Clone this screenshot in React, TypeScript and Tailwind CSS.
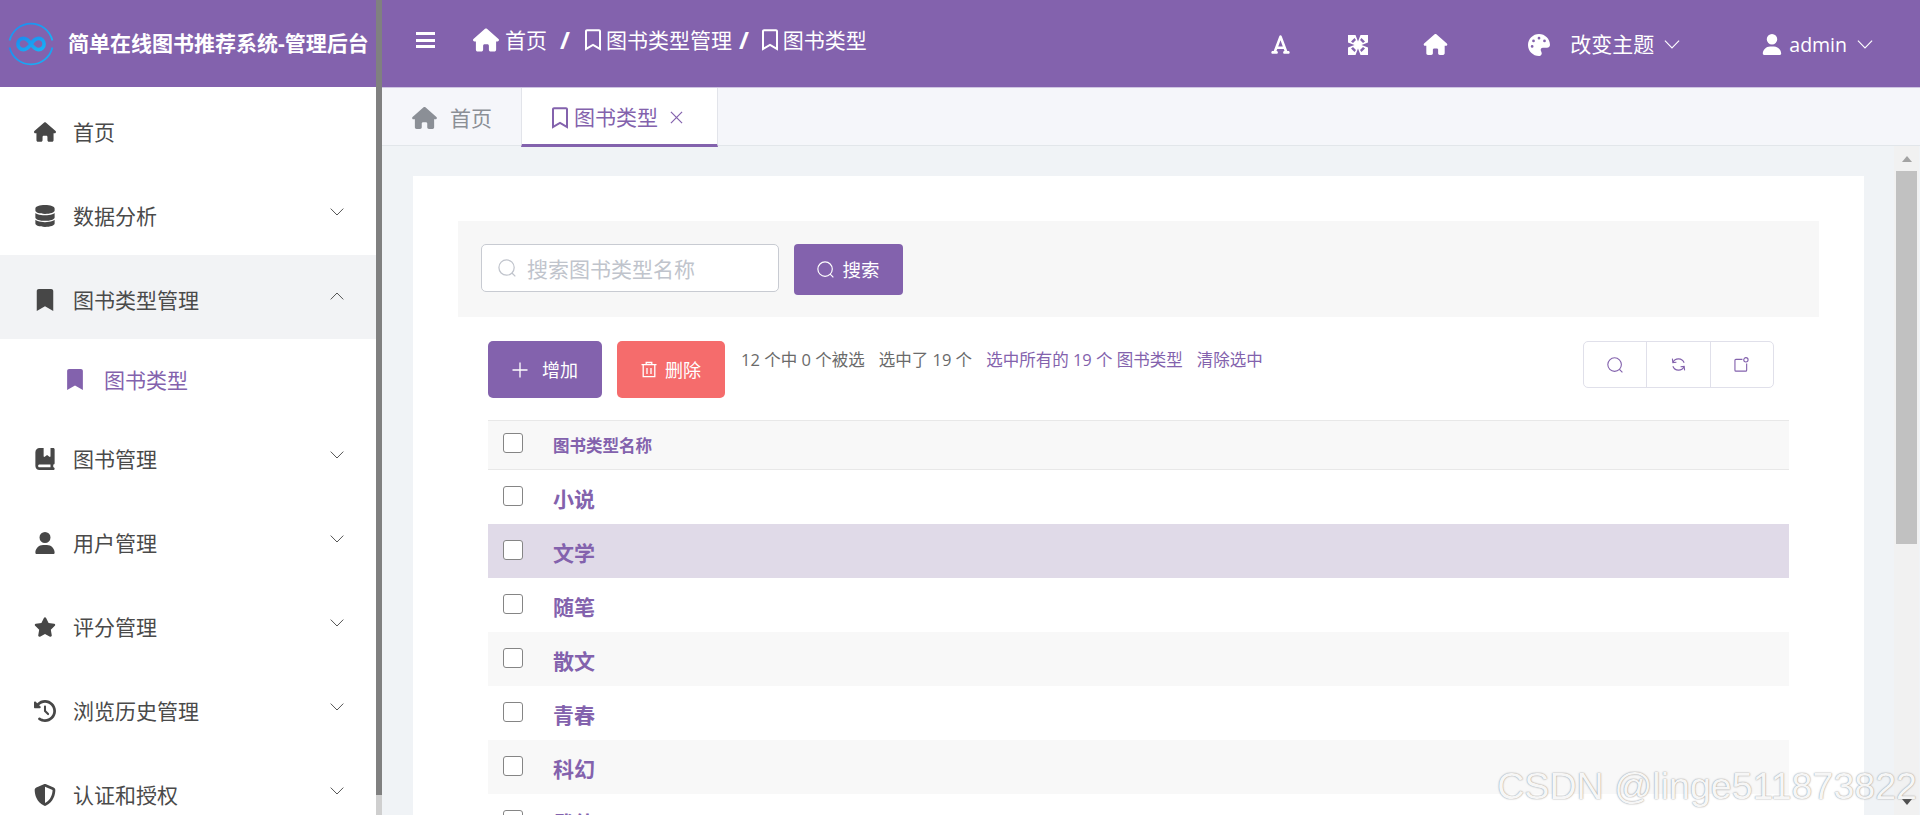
import type { IconType } from "react-icons";
import { FaBookmark, FaRegBookmark, FaStar } from "react-icons/fa";
import {
  FaBookBookmark,
  FaClockRotateLeft,
  FaDatabase,
  FaFont,
  FaHouse,
  FaPalette,
  FaShieldHalved,
  FaUser,
} from "react-icons/fa6";

interface MenuItem {
  label: string;
  icon: IconType;
  arrow?: "down" | "up";
  active?: boolean;
}

const topMenu: MenuItem[] = [
  { label: "首页", icon: FaHouse },
  { label: "数据分析", icon: FaDatabase, arrow: "down" },
  { label: "图书类型管理", icon: FaBookmark, arrow: "up", active: true },
];

const bottomMenu: MenuItem[] = [
  { label: "图书管理", icon: FaBookBookmark, arrow: "down" },
  { label: "用户管理", icon: FaUser, arrow: "down" },
  { label: "评分管理", icon: FaStar, arrow: "down" },
  { label: "浏览历史管理", icon: FaClockRotateLeft, arrow: "down" },
  { label: "认证和授权", icon: FaShieldHalved, arrow: "down" },
];

const rows = ["小说", "文学", "随笔", "散文", "青春", "科幻", "武侠"];

function Chevron({ up, className }: { up?: boolean; className: string }) {
  return (
    <svg viewBox="0 0 14 8" fill="none" stroke="currentColor" strokeWidth="1" className={className}>
      <path d={up ? "M0.7 7.4 7 1l6.3 6.4" : "M0.7 0.6 7 7l6.3-6.4"} />
    </svg>
  );
}

function SearchIcon({ className }: { className: string }) {
  return (
    <svg viewBox="0 0 16 16" fill="none" stroke="currentColor" strokeWidth="1.1" className={className}>
      <circle cx="7.6" cy="7.6" r="6.8" />
      <path d="M12.4 12.4 15.4 15.400" />
    </svg>
  );
}

function MenuRow({ item }: { item: MenuItem }) {
  const Icon = item.icon;
  return (
    <div className={`flex h-[84px] shrink-0 items-center pl-[34px] pr-[32px] ${item.active ? "bg-[#f2f3f5]" : "bg-white"}`}>
      <span className="mt-[5px] flex w-[22px] justify-center text-[#474747]">
        <Icon className="h-[22px] w-[22px]" />
      </span>
      <span className="ml-[17px] flex-1 pt-[7px] text-[21px] leading-none text-[#4a4a4a]">{item.label}</span>
      {item.arrow && <Chevron up={item.arrow === "up"} className="mb-[3px] h-[8px] w-[14px] text-[#555555]" />}
    </div>
  );
}

function Sidebar() {
  return (
    <aside className="flex h-full w-[376px] shrink-0 flex-col overflow-hidden bg-white">
      <div className="flex h-[87px] shrink-0 items-center bg-[#8362ad] pl-[8px]">
        <svg viewBox="0 0 46 46" fill="none" className="h-[46px] w-[46px] shrink-0">
          <defs>
            <linearGradient id="logoBlue" x1="0" y1="0" x2="1" y2="1">
              <stop offset="0" stopColor="#1c8cf0" />
              <stop offset="1" stopColor="#17b3f6" />
            </linearGradient>
          </defs>
          <path d="M1.6 19.5A22 22 0 0 1 44.4 19.5" stroke="url(#logoBlue)" strokeWidth="1.8" />
          <path d="M44.4 26.5A22 22 0 0 1 1.6 26.5" stroke="url(#logoBlue)" strokeWidth="1.8" />
          <path
            d="M23 23c-2.6-3.8-4.800-5.600-7.500-5.600a5.600 5.600 0 0 0 0 11.200c2.700 0 4.900-1.800 7.500-5.600s4.800-5.600 7.500-5.600a5.600 5.600 0 0 1 0 11.200c-2.700 0-4.900-1.800-7.500-5.600Z"
            stroke="url(#logoBlue)"
            strokeWidth="3.6"
          />
        </svg>
        <span className="ml-[14px] whitespace-nowrap text-[21px] font-bold leading-none text-white">
          简单在线图书推荐系统-管理后台
        </span>
      </div>
      {topMenu.map((item) => (
        <MenuRow key={item.label} item={item} />
      ))}
      <div className="flex h-[75px] shrink-0 items-center pl-[67px] text-[#8362ad]">
        <FaBookmark className="mt-[6px] h-[21px] w-[16px]" />
        <span className="ml-[21px] pt-[7px] text-[21px] leading-none">图书类型</span>
      </div>
      {bottomMenu.map((item) => (
        <MenuRow key={item.label} item={item} />
      ))}
    </aside>
  );
}

function TopBar() {
  return (
    <header className="flex h-[88px] shrink-0 items-center border-b border-[#cfc5e2] bg-[#8362ad] pb-[7px] text-white">
      <div className="ml-[34px] flex h-[16px] w-[19px] flex-col justify-between">
        <span className="h-[3px] bg-white" />
        <span className="h-[3px] bg-white" />
        <span className="h-[3px] bg-white" />
      </div>
      <FaHouse className="ml-[38px] h-[24px] w-[26px]" />
      <span className="ml-[6px] text-[21px] leading-none">首页</span>
      <span className="ml-[13px] text-[24px] font-bold leading-none">/</span>
      <FaRegBookmark className="ml-[15px] h-[22px] w-[16px]" />
      <span className="ml-[5px] text-[21px] leading-none">图书类型管理</span>
      <span className="ml-[7px] text-[24px] font-bold leading-none">/</span>
      <FaRegBookmark className="ml-[13px] h-[22px] w-[16px]" />
      <span className="ml-[5px] text-[21px] leading-none">图书类型</span>

      <div className="ml-auto flex items-center pt-[9px]">
        <FaFont className="h-[21px] w-[21px]" />
        <svg viewBox="0 0 20 20" className="ml-[57px] h-[20px] w-[20px] fill-white">
          <path
            fillRule="evenodd"
            d="M0 0H20V20H0ZM7.500 0 10 6.500 12.500 0ZM7.500 20 10 13.500 12.500 20ZM0 7.500 6.500 10 0 12.500ZM20 7.500 13.500 10 20 12.500ZM6.500 3 3 6.500 5 8 8 5ZM13.500 3 17 6.500 15 8 12 5ZM6.500 17 3 13.500 5 12 8 15ZM13.500 17 17 13.500 15 12 12 15Z"
          />
        </svg>
        <FaHouse className="ml-[55px] h-[21px] w-[25px]" />
        <FaPalette className="ml-[80px] h-[22px] w-[22px]" />
        <span className="ml-[20px] text-[21px] leading-none">改变主题</span>
        <Chevron className="ml-[10px] h-[9px] w-[16px]" />
        <FaUser className="ml-[82px] h-[21px] w-[20px]" />
        <span className="ml-[7px] text-[19.500px] leading-none">admin</span>
        <Chevron className="ml-[10px] mr-[47px] h-[9px] w-[16px]" />
      </div>
    </header>
  );
}

function TabBar() {
  return (
    <div className="flex h-[58px] shrink-0 border-b border-[#e2e6ea] bg-[#f5f6fa]">
      <div className="flex w-[139px] items-center pl-[30px] pt-[3px] text-[#8b8f96]">
        <FaHouse className="h-[22px] w-[25px]" />
        <span className="ml-[13px] text-[21px] leading-none">首页</span>
      </div>
      <div className="relative z-10 -mb-[2px] flex w-[197px] items-center border-x border-b-[3px] border-x-[#e2e4ea] border-b-[#8362ad] bg-white pl-[30px] pt-[3px] text-[#8362ad]">
        <FaRegBookmark className="h-[22px] w-[16px]" />
        <span className="ml-[6px] text-[21px] leading-none">图书类型</span>
        <svg viewBox="0 0 14 14" fill="none" stroke="currentColor" strokeWidth="1.3" className="ml-[12px] h-[13px] w-[13px]">
          <path d="M1 1l12 12M13 1 1 13" />
        </svg>
      </div>
    </div>
  );
}

function SearchBar() {
  return (
    <div className="flex h-[96px] items-start bg-[#f7f7f7] pl-[23px] pt-[23px]">
      <div className="flex h-[48px] w-[298px] items-center rounded-[5px] border border-[#c8cbd2] bg-white pl-[16px]">
        <SearchIcon className="h-[18px] w-[18px] text-[#c0c4cc]" />
        <span className="ml-[11px] pt-[2px] text-[21px] leading-none text-[#c0c4cc]">搜索图书类型名称</span>
      </div>
      <button className="ml-[15px] flex h-[51px] w-[109px] items-center justify-center rounded-[4px] bg-[#8362ad] text-[18.500px] text-white">
        <SearchIcon className="h-[17px] w-[17px]" />
        <span className="ml-[8px] pt-[2px] leading-none">搜索</span>
      </button>
    </div>
  );
}

function Toolbar() {
  return (
    <div className="mx-[30px] mt-[24px] flex h-[57px] items-start">
      <button className="flex h-[57px] w-[114px] items-center justify-center rounded-[5px] bg-[#8362ad] text-white">
        <svg viewBox="0 0 16 16" fill="none" stroke="currentColor" strokeWidth="1.3" className="h-[16px] w-[16px]">
          <path d="M8 0.500v15M0.500 8h15" />
        </svg>
        <span className="ml-[14px] text-[18px] leading-none">增加</span>
      </button>
      <button className="ml-[15px] flex h-[57px] w-[108px] items-center justify-center rounded-[5px] bg-[#f56c6c] text-white">
        <svg viewBox="0 0 16 16" fill="none" stroke="currentColor" strokeWidth="1.3" className="h-[17px] w-[16px]">
          <path d="M0.500 3.200h15M5.200 3V1h5.600v2M2.200 3.200v12h11.600v-12M6 6.500v6M10 6.500v6" />
        </svg>
        <span className="ml-[8px] text-[18px] leading-none">删除</span>
      </button>
      <div className="ml-[16px] mt-[9px] flex items-center whitespace-nowrap text-[16.500px] leading-[20px]">
        <span className="text-[#6a6a6a]">12 个中 0 个被选</span>
        <span className="ml-[14px] text-[#6a6a6a]">选中了 19 个</span>
        <span className="ml-[14px] text-[#8362ad]">选中所有的 19 个 图书类型</span>
        <span className="ml-[14px] text-[#8362ad]">清除选中</span>
      </div>
      <div className="ml-auto mr-[15px] flex h-[47px] w-[191px] rounded-[5px] border border-[#e0e0ea] text-[#8362ad]">
        <div className="flex flex-1 items-center justify-center border-r border-[#e0e0ea]">
          <SearchIcon className="h-[16px] w-[16px]" />
        </div>
        <div className="flex flex-1 items-center justify-center border-r border-[#e0e0ea]">
          <svg viewBox="0 0 16 16" fill="none" stroke="currentColor" strokeWidth="1.2" className="h-[15px] w-[15px]">
            <path d="M2 5.800A6.500 6.500 0 0 1 14 6.200M14 10.200A6.500 6.500 0 0 1 2 9.800" />
            <path d="M1.500 1.800 2 6l3.800-0.400M14.500 14.200 14 10l-3.800 0.400" />
          </svg>
        </div>
        <div className="flex flex-1 items-center justify-center">
          <svg viewBox="0 0 16 16" fill="none" stroke="currentColor" strokeWidth="1.2" className="h-[15px] w-[15px]">
            <path d="M9 2.500H2a1 1 0 0 0-1 1V14a1 1 0 0 0 1 1h10.500a1 1 0 0 0 1-1V7" />
            <circle cx="12.700" cy="3" r="2.300" />
          </svg>
        </div>
      </div>
    </div>
  );
}

function CheckBox() {
  return (
    <input
      type="checkbox"
      className="h-[20px] w-[20px] appearance-none rounded-[3px] border border-[#858585] bg-white"
    />
  );
}

function DataTable() {
  return (
    <div className="mx-[30px] mt-[22px]">
      <div className="flex h-[50px] items-center border-y border-[#e8e8e8] bg-[#f8f8f8] pl-[15px]">
        <span className="mb-[4px] flex">
          <CheckBox />
        </span>
        <span className="ml-[30px] pt-[2px] text-[16.500px] font-bold leading-none text-[#8362ad]">图书类型名称</span>
      </div>
      {rows.map((name, index) => (
        <div
          key={name}
          className={`flex h-[54px] shrink-0 items-center pl-[15px] ${
            index === 1 ? "bg-[#e0dae8]" : index % 2 === 1 ? "bg-[#f8f8f8]" : "bg-white"
          }`}
        >
          <span className="mb-[2px] flex">
            <CheckBox />
          </span>
          <span className="ml-[30px] pt-[4px] text-[21px] font-bold leading-none text-[#8362ad]">{name}</span>
        </div>
      ))}
    </div>
  );
}

function PageScrollbar() {
  return (
    <div className="mr-[1px] flex w-[25px] shrink-0 flex-col items-center bg-[#f1f1f1] pb-[10px]">
      <div className="flex h-[25px] w-full items-center justify-center">
        <svg viewBox="0 0 10 6" className="h-[6px] w-[10px] fill-[#a3a3a3]">
          <path d="M5 0l5 6H0z" />
        </svg>
      </div>
      <div className="h-[373px] w-[21px] shrink-0 bg-[#c1c1c1]" />
      <div className="mt-auto">
        <svg viewBox="0 0 10 6" className="h-[6px] w-[10px] fill-[#505050]">
          <path d="M5 6 0 0h10z" />
        </svg>
      </div>
    </div>
  );
}

export default function App() {
  return (
    <div className="relative flex h-[815px] w-[1920px] overflow-hidden bg-white [font-family:'Open_Sans','Noto_Sans_CJK_SC',sans-serif]">
      <Sidebar />
      <div className="flex h-full w-[6px] shrink-0 flex-col bg-[#cfcfcf]">
        <div className="h-[795px] bg-[#808080]" />
      </div>
      <main className="flex min-w-0 flex-1 flex-col">
        <TopBar />
        <TabBar />
        <div className="flex min-h-0 flex-1 bg-[#f0f3f6]">
          <div className="min-w-0 flex-1 overflow-hidden pl-[31px] pr-[30px] pt-[30px]">
            <div className="bg-white px-[45px] pb-[40px] pt-[45px]">
              <SearchBar />
              <Toolbar />
              <DataTable />
            </div>
          </div>
          <PageScrollbar />
        </div>
      </main>
      <div className="absolute bottom-[11px] right-[3px] whitespace-nowrap text-[37.600px] leading-[36px] text-[#f6f6f6] [font-family:'Liberation_Sans',sans-serif] [text-shadow:0_0_1.500px_#777777]">
        CSDN @linge511873822
      </div>
    </div>
  );
}
